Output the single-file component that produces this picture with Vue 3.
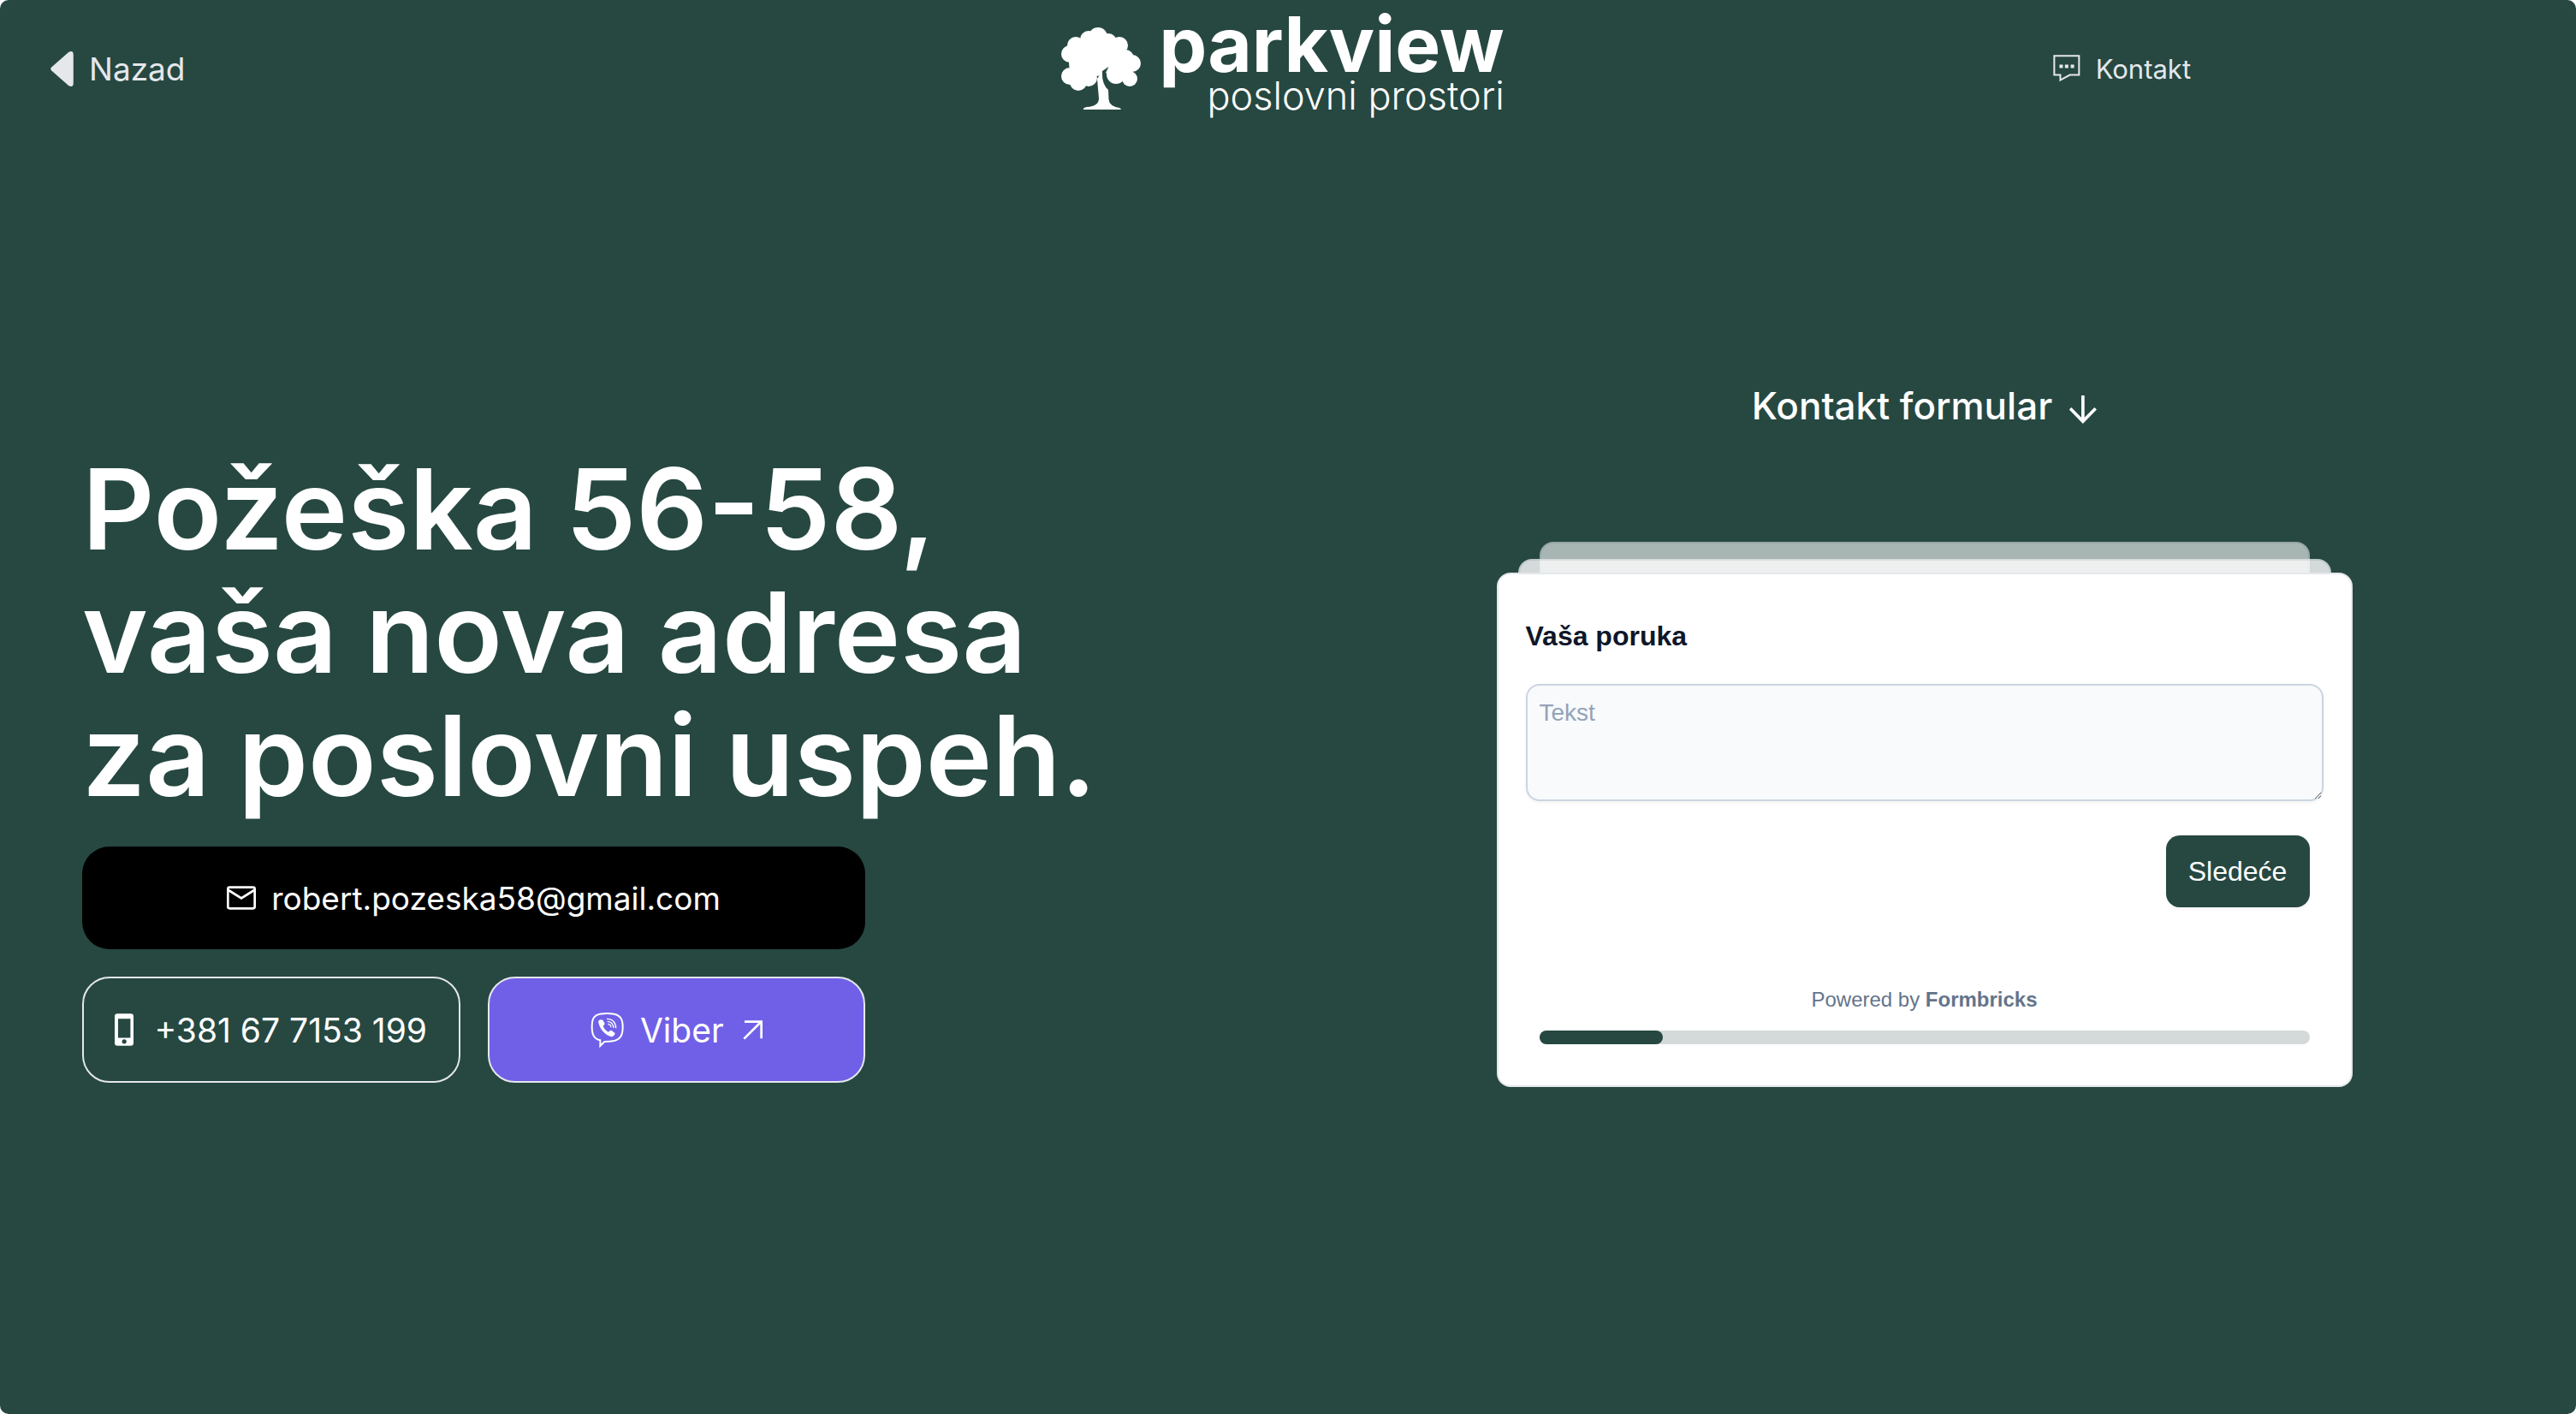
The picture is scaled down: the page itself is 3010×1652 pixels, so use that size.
<script setup>
import { ref } from 'vue'

const message = ref('')
const progress = 16
</script>

<template>
  <div class="page">
    <header class="topbar">
      <a class="back" href="#">
        <svg class="back-icon" viewBox="177 178 80 124" aria-hidden="true">
          <path d="M179 245Q175 240 179 235L240 181Q257 172 257 190V290Q257 308 240 299Z" fill="currentColor" />
        </svg>
        <span>Nazad</span>
      </a>

      <a class="logo" href="#">
        <svg class="tree" viewBox="22 32 94 97" aria-hidden="true">
          <g fill="#fff">
            <circle cx="65" cy="43" r="11" /><circle cx="54" cy="46" r="10" /><circle cx="77" cy="49" r="10" />
            <circle cx="90" cy="53" r="10" /><circle cx="39" cy="53" r="10" /><circle cx="32" cy="63" r="10" />
            <circle cx="97" cy="68" r="10" /><circle cx="105" cy="74" r="10" /><circle cx="32" cy="89" r="10" />
            <circle cx="42" cy="96" r="10" /><circle cx="102" cy="92" r="9" /><circle cx="86" cy="87" r="11" />
            <circle cx="54" cy="91" r="10" /><circle cx="62" cy="64" r="25" /><circle cx="50" cy="74" r="19" />
            <circle cx="86" cy="69" r="16" /><circle cx="96" cy="82" r="9" />
          </g>
          <path class="tree-gap" d="M77.500 78L70 83Q69 98 77 105L84 99Q72 95 74.500 84Z" />
          <path fill="#fff" d="M48 128Q47 126 52 125Q66 124 66 115L64 92L70 83Q69 98 77 105L77.500 116Q78 124 90 126Q92 127 92 128Z" />
        </svg>
        <span class="logo-text">
          <span class="logo-name">parkview</span>
          <span class="logo-sub">poslovni prostori</span>
        </span>
      </a>

      <nav class="topnav">
        <a class="contact" href="#">
          <svg class="chat-icon" viewBox="119 104 95 95" aria-hidden="true">
            <path d="M123 108H209V174H177L144 192V174H123Z" fill="none" stroke="currentColor" stroke-width="6" />
            <path d="M141 138h12v12h-12zM160 138h12v12h-12zM180 138h12v12h-12z" fill="currentColor" />
          </svg>
          <span>Kontakt</span>
        </a>
      </nav>
    </header>

    <main class="content">
      <section class="intro">
        <h1>Požeška 56-58,<br />vaša nova adresa<br />za poslovni uspeh.</h1>
        <div class="actions">
          <a class="action email" href="mailto:robert.pozeska58@gmail.com">
            <svg class="mail-icon" viewBox="48 46 102 82" aria-hidden="true">
              <rect x="52" y="50" width="94" height="74" rx="6" fill="none" stroke="#fff" stroke-width="8" />
              <path d="M54 60L99 88L144 60" fill="none" stroke="#fff" stroke-width="8" />
            </svg>
            <span>robert.pozeska58@gmail.com</span>
          </a>
          <a class="action phone" href="tel:+381677153199">
            <svg class="phone-icon" viewBox="53 72 67 114" aria-hidden="true">
              <path fill="#fff" fill-rule="evenodd" d="M63 72H110Q120 72 120 82V176Q120 186 110 186H63Q53 186 53 176V82Q53 72 63 72ZM65 90V158H109V90ZM87 163A8 8 0 0 0 87 179A8 8 0 0 0 87 163Z" />
            </svg>
            <span>+381 67 7153 199</span>
          </a>
          <a class="action viber" href="#">
            <svg class="viber-icon" viewBox="55 66 120 126" aria-hidden="true">
              <path fill="none" stroke="#fff" stroke-width="6" d="M60 120C60 90 68 78 88 74C105 71 122 71 138 74C160 79 168 92 168 120C168 148 160 162 138 168C128 170 115 171 104 171L89 186V166C68 160 60 148 60 120Z" />
              <path fill="#fff" d="M84 97Q92 91 98 95L105 107Q105 112 99 116Q104 130 118 137Q124 130 128 131L140 140Q143 145 133 153Q128 155 120 151C102 142 90 128 84 108Q81 101 84 97Z" />
              <path fill="none" stroke="#fff" stroke-width="4" d="M112 91C132 91 144 104 144 124M114 100C127 101 135 110 136 123M116 109C122 110 127 114 127 121" />
            </svg>
            <span>Viber</span>
            <svg class="out-icon" viewBox="571 96 68 68" aria-hidden="true">
              <path d="M575 160L634 101M577 101H635V159" fill="none" stroke="#fff" stroke-width="8" />
            </svg>
          </a>
        </div>
      </section>

      <section class="form-side">
        <h2>
          <span>Kontakt formular</span>
          <svg class="down-icon" viewBox="1240 104 95 122" aria-hidden="true">
            <path d="M1287 128V217M1243 173L1287 218L1331 173" fill="none" stroke="#fff" stroke-width="11" />
          </svg>
        </h2>
        <div class="stack">
          <div class="sheet sheet-back"></div>
          <div class="sheet sheet-mid"></div>
          <form class="card" @submit.prevent>
            <label for="message">Vaša poruka</label>
            <textarea id="message" v-model="message" placeholder="Tekst"></textarea>
            <button type="submit">Sledeće</button>
            <p class="powered">Powered by <a href="#">Formbricks</a></p>
            <div class="track">
              <div class="fill" :style="{ width: progress + '%' }"></div>
            </div>
          </form>
        </div>
      </section>
    </main>
  </div>
</template>

<style>
body {
  margin: 0;
  background: #fff;
}
</style>

<style scoped>
* {
  box-sizing: border-box;
}

a {
  color: inherit;
  text-decoration: none;
}

svg {
  display: block;
  flex: none;
}

.page {
  display: flex;
  flex-direction: column;
  min-height: 100vh;
  padding-right: 12px;
  border-radius: 10px;
  background: #264841;
  color: #fff;
  font-family: Inter, "Liberation Sans", sans-serif;
}

.topbar {
  display: grid;
  grid-template-columns: 1fr 1fr 1fr;
  align-items: center;
  height: 160px;
}

.back {
  display: flex;
  align-items: center;
  gap: 18px;
  padding-left: 59px;
  color: #e5e7eb;
  font-size: 37px;
}

.back-icon {
  width: 27px;
  height: 41px;
}

.logo {
  display: flex;
  align-items: center;
  justify-content: center;
  gap: 20px;
}

.tree {
  width: 94px;
  height: 97px;
}

.logo-text {
  display: flex;
  flex-direction: column;
  align-items: flex-end;
  padding-bottom: 16px;
}

.logo-name {
  font-size: 89px;
  font-weight: 700;
  line-height: 80px;
}

.logo-sub {
  font-size: 45px;
  font-weight: 300;
  line-height: 40px;
}

.topnav {
  padding-left: 400px;
}

.contact {
  display: flex;
  align-items: center;
  gap: 18px;
  color: #e5e7eb;
  font-size: 31px;
}

.chat-icon {
  width: 32px;
  height: 32px;
}

.content {
  display: grid;
  grid-template-columns: 1fr 1fr;
  align-items: start;
  padding-bottom: 64px;
}

.intro {
  padding: 363px 0 0 96px;
}

h1 {
  margin: 0;
  font-size: 131px;
  font-weight: 600;
  line-height: 144px;
  white-space: nowrap;
}

.actions {
  display: grid;
  grid-template-columns: 1fr 1fr;
  gap: 32px;
  width: 915px;
  margin-top: 34px;
}

.action {
  display: flex;
  align-items: center;
  justify-content: center;
  height: 124px;
  border: 2px solid #e5e7eb;
  border-radius: 32px;
  font-size: 39px;
  white-space: nowrap;
}

.email {
  grid-column: 1 / -1;
  gap: 18px;
  height: 120px;
  border: 0;
  background: #000;
  font-size: 37px;
}

.phone {
  gap: 24px;
}

.viber {
  gap: 18px;
  background: #7060e8;
}

.mail-icon {
  width: 34px;
  height: 28px;
}

.phone-icon {
  width: 22px;
  height: 38px;
}

.viber-icon {
  width: 40px;
  height: 42px;
}

.out-icon {
  width: 23px;
  height: 23px;
  margin-left: 4px;
}

.form-side {
  display: flex;
  flex-direction: column;
  align-items: center;
  padding-top: 284px;
}

h2 {
  display: flex;
  align-items: center;
  gap: 20px;
  margin: 0;
  font-size: 44px;
  font-weight: 500;
  line-height: 60px;
}

.down-icon {
  width: 32px;
  height: 41px;
}

.stack {
  display: grid;
  justify-items: center;
  width: 1000px;
  margin-top: 129px;
}

.sheet {
  grid-area: 1 / 1;
  border: 2px solid #e5e7eb;
  border-bottom: 0;
  border-radius: 16px 16px 0 0;
  background: #fff;
}

.sheet-back {
  width: 900px;
  height: 36px;
  opacity: 0.6;
}

.sheet-mid {
  width: 950px;
  height: 16px;
  margin-top: 20px;
  opacity: 0.8;
}

.card {
  grid-area: 2 / 1;
  display: flex;
  flex-direction: column;
  width: 100%;
  padding: 48px 32px;
  border: 2px solid #e5e7eb;
  border-radius: 16px;
  background: #fff;
  font-family: "Liberation Sans", Arial, sans-serif;
}

label {
  color: #0f172a;
  font-size: 32px;
  font-weight: 700;
  line-height: 48px;
}

textarea {
  height: 137px;
  margin: 32px 0 40px;
  padding: 12px 14px;
  border: 2px solid #cbd5e1;
  border-radius: 16px;
  background: #f8fafc;
  box-shadow: 0 2px 4px rgb(0 0 0 / 5%);
  color: #0f172a;
  font: 28px/40px "Liberation Sans", Arial, sans-serif;
  resize: vertical;
}

textarea::placeholder {
  color: #94a3b8;
}

button {
  align-self: flex-end;
  width: 168px;
  height: 84px;
  margin-right: 16px;
  padding: 0;
  border: 0;
  border-radius: 16px;
  background: #264841;
  box-shadow: 0 2px 4px rgb(0 0 0 / 5%);
  color: #fff;
  font: 500 32px/40px "Liberation Sans", Arial, sans-serif;
}

.powered {
  margin: 92px 0 20px;
  color: #64748b;
  font-size: 24px;
  line-height: 32px;
  text-align: center;
}

.powered a {
  font-weight: 700;
}

.track {
  height: 16px;
  margin: 0 16px;
  border-radius: 8px;
  background: #d4dad9;
}

.fill {
  height: 100%;
  border-radius: 8px;
  background: #264841;
}

.tree-gap {
  fill: #264841;
}
</style>
